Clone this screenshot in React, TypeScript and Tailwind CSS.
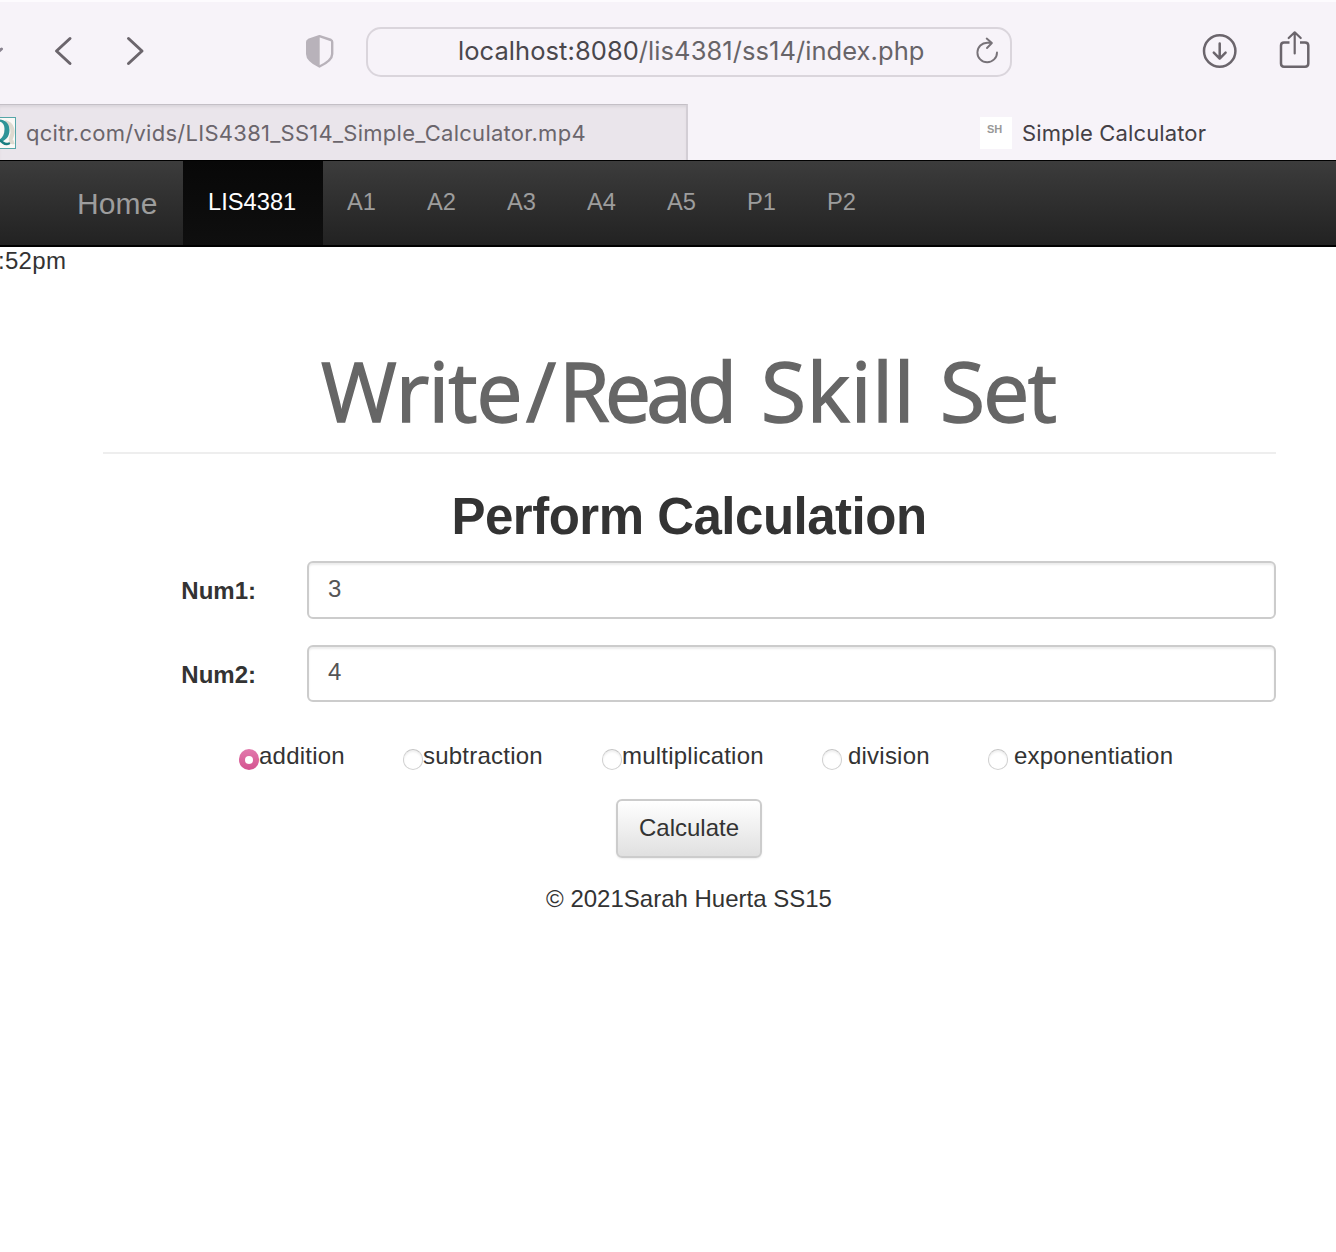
import React from "react";

const links = ["A1", "A2", "A3", "A4", "A5", "P1", "P2"];

function Toolbar() {
  return (
    <header className="flex h-[104px] items-start border-t-2 border-[#fdfbfe] bg-[#f7f3f9] text-[#6b656c]">
      <svg className="h-[100px] w-[366px] shrink-0" viewBox="0 2 366 100" fill="none" stroke="#6b656c" strokeWidth="3" strokeLinecap="round" strokeLinejoin="round">
        <path d="M-3 53 L1.500 49" stroke="#8a8390" />
        <path d="M70 38.500 L56.500 51 L70 63.500" />
        <path d="M128.500 38.500 L142 51 L128.500 63.500" />
        <path d="M319.500 36.200 L331 40 Q332.200 40.500 332.200 42 V54 Q332.200 60.500 319.500 66.500 Q307.200 60.500 307.200 54 V42 Q307.200 40.500 308.500 40 Z" stroke="#b8b2ba" strokeWidth="2.400" />
        <path d="M319.700 36 L308.500 40 Q307 40.500 307 42 V54 Q307 60.500 319.700 66.500 Z" fill="#b8b2ba" stroke="none" />
      </svg>
      <div className="mt-[25px] flex h-[50px] w-[646px] shrink-0 items-center rounded-[15px] border-2 border-[#dad5dc] pl-[90px] pr-[10px]">
        <div className="-mt-[2px] w-[467px] whitespace-nowrap font-['Inter'] text-[25.500px] leading-[30px] tracking-[0.060px] text-[#676468]">
          <span className="text-[#4a474c]">localhost:8080</span>/lis4381/ss14/index.php
        </div>
        <svg className="-mt-[3px] ml-auto h-8 w-[25px] shrink-0" viewBox="975 34 25 32" fill="none" stroke="#777278" strokeWidth="1.900" strokeLinecap="round" strokeLinejoin="round">
          <path d="M997 51.500 A9.800 9.800 0 1 1 987.300 41.700 H991.500 M986.700 37.500 L991.900 42 L987 47" />
        </svg>
      </div>
      <svg className="h-[100px] w-[324px] shrink-0" viewBox="1012 2 324 100" fill="none" stroke="#6b656c" strokeWidth="2.500" strokeLinecap="round" strokeLinejoin="round">
        <circle cx="1219.700" cy="51" r="15.700" />
        <path d="M1219.700 43.500 V58.500 M1213.800 52.700 L1219.700 58.700 L1225.600 52.700" />
        <path d="M1289.500 42.500 H1284 Q1281 42.500 1281 45.500 V63.500 Q1281 66.700 1284 66.700 H1305 Q1308.300 66.700 1308.300 63.500 V45.500 Q1308.300 42.500 1305 42.500 H1300" strokeLinecap="butt" />
        <path d="M1294.700 53.500 V33 M1288.700 38 L1294.700 32.300 L1300.700 38" strokeWidth="2.200" />
      </svg>
    </header>
  );
}

function Tabs() {
  return (
    <div className="flex h-14 bg-[#f7f3f9] font-['Inter'] text-[22px] leading-[28px]">
      <div className="flex w-[688px] items-center border-r-2 border-t border-r-[#d3ced5] border-t-[#c4bfc6] bg-[#eae5eb] text-[#6b656c] shadow-[inset_0_3px_3px_-1px_#d9d4da]">
        <svg className="mt-px h-8 w-4 shrink-0" viewBox="0 0 16 32" fill="none">
          <rect x="-16" y="0.500" width="31.500" height="31" fill="#faf9f6" stroke="#55a6a8" />
          <path d="M5 5 C13 7 14 15 11 21 C10 24 11 26 14 25" stroke="#dedad0" strokeWidth="4" />
          <path d="M-1 2.500 C3 2.500 9.500 5 9.500 13 C9.500 21 4 25 -2 25 V23 C2 22 4.500 18 4.500 12 C4.500 7 2 5 -1 4.500 Z" fill="#2e9497" />
          <path d="M-1 23.500 C3 24 4 29 9 26.500" stroke="#187d80" strokeWidth="2.400" strokeLinecap="round" />
        </svg>
        <span className="ml-[10px] whitespace-nowrap tracking-[0.270px]">qcitr.com/vids/LIS4381_SS14_Simple_Calculator.mp4</span>
      </div>
      <div className="flex flex-1 items-center pl-[292px] text-[#444046]">
        <div className="mt-px h-8 w-8 bg-white pl-[7px] pt-[6px] font-['Liberation_Sans'] text-[11px] font-bold leading-3 text-[#999]">SH</div>
        <span className="ml-[10px] mt-px whitespace-nowrap tracking-[0.120px]">Simple Calculator</span>
      </div>
    </div>
  );
}

function Navbar() {
  return (
    <nav className="flex h-[87px] border-b-2 border-t border-black bg-gradient-to-b from-[#3c3c3c] to-[#222] text-[23.700px] leading-[34px] text-[#9d9d9d]">
      <a className="w-[183px] pl-[77px] pt-[26px] text-[30px] tracking-[0.100px]">Home</a>
      <a className="w-[140px] bg-gradient-to-b from-[#080808] to-[#0f0f0f] pl-[25px] pt-6 text-white">LIS4381</a>
      {links.map((l) => (
        <a key={l} className="w-20 pr-[3px] pt-6 text-center">{l}</a>
      ))}
    </nav>
  );
}

function Field({ label, value, className, inset }: { label: string; value: string; className: string; inset: string }) {
  return (
    <div className={"flex " + className}>
      <label className="w-[205px] pr-[51px] pt-[13px] text-right font-bold leading-[34px]">{label}</label>
      <div className={"flex-1 rounded-[6px] border-2 border-[#ccc] pl-[19px] leading-[34px] text-[#555] shadow-[inset_0_2px_2px_#00000013] " + inset}>{value}</div>
    </div>
  );
}

function Radio({ label, checked, className }: { label: string; checked?: boolean; className: string }) {
  return (
    <label className={"flex items-start whitespace-nowrap " + className}>
      {checked ? (
        <span className="mt-[10px] flex h-[21px] w-5 shrink-0 items-center justify-center rounded-full bg-gradient-to-b from-[#e279ad] to-[#d4528f]">
          <span className="h-2 w-2 rounded-full bg-white" />
        </span>
      ) : (
        <span className="mt-[10px] h-[21px] w-5 shrink-0 rounded-full border border-[#d2d2d2] border-t-[#c4c4c4] bg-white shadow-[inset_0_2px_2px_#00000010]" />
      )}
      {label}
    </label>
  );
}

export default function App() {
  return (
    <div className="h-[1252px] w-[1336px] overflow-hidden bg-white font-['Liberation_Sans',sans-serif] text-[24px] leading-[34px] text-[#333]">
      <Toolbar />
      <Tabs />
      <Navbar />
      <div className="-ml-[2px] -mt-[3px] h-[34px] tracking-[0.300px]">:52pm</div>
      <main className="ml-[102px] w-[1174px]">
        <h1 className="ml-px flex h-[176px] whitespace-pre border-b-2 border-[#eee] pl-[218px] pt-[52px] font-['Open_Sans'] text-[82px] leading-[120px] text-[#666] [-webkit-text-stroke:1.5px_#666]">
          <span className="w-[205px] tracking-[-0.900px]">Write</span>
          <span className="w-[33px]">/</span>
          <span className="w-[202px] tracking-[-4.700px]">Read </span>
          <span className="w-[179px] tracking-[0.800px]">Skill </span>
          <span className="tracking-[-1.600px]">Set</span>
        </h1>
        <h2 className="h-[107px] pt-[33px] text-center text-[51px] font-bold leading-[60px] tracking-[-0.500px]">Perform Calculation</h2>
        <div className="flex flex-col">
          <Field className="h-[58px]" inset="pt-[9px]" label="Num1:" value="3" />
          <Field className="mt-[26px] h-[57px]" inset="pt-2" label="Num2:" value="4" />
        </div>
        <div className="mt-[37px] flex h-[34px] pl-[137px] tracking-[0.220px]">
          <Radio className="w-[164px]" label="addition" checked />
          <Radio className="w-[199px]" label="subtraction" />
          <Radio className="w-[220px]" label="multiplication" />
          <Radio className="w-[166px] gap-[6px]" label="division" />
          <Radio className="gap-[6px]" label="exponentiation" />
        </div>
        <button className="mx-auto mt-[26px] block h-[59px] w-[146px] rounded-[6px] border-2 border-[#ccc] bg-gradient-to-b from-white to-[#e0e0e0] pb-[2px] shadow-[0_1px_2px_#00000013]">Calculate</button>
        <p className="mt-6 text-center">© 2021Sarah Huerta SS15</p>
      </main>
    </div>
  );
}
